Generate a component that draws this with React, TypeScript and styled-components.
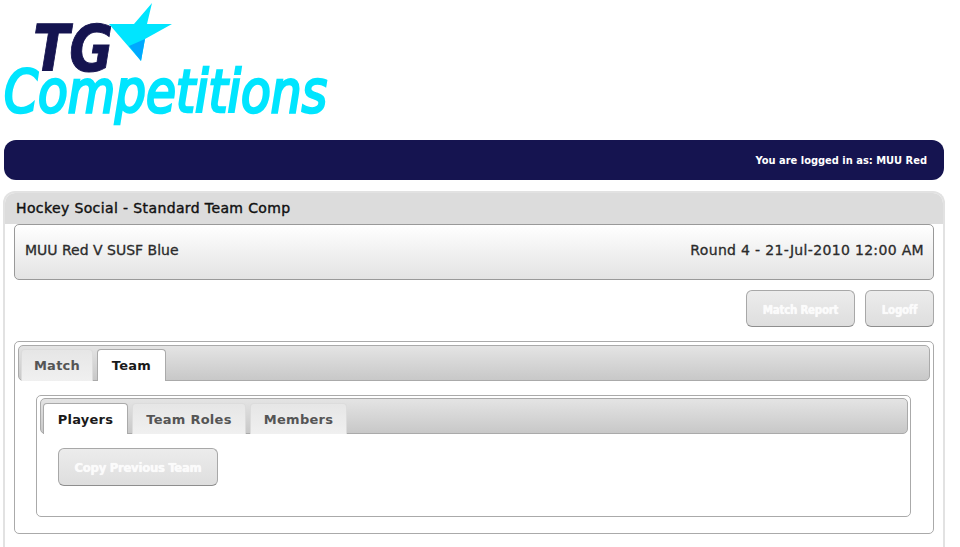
import React from 'react';
import styled, { createGlobalStyle } from 'styled-components';

const GlobalStyle = createGlobalStyle`
    html, body {
        margin: 0;
        padding: 0;
        height: 547px;
        overflow: hidden;
        background: #fff;
    }
    body {
        font-family: 'DejaVu Sans', Verdana, sans-serif;
    }
`;

const Page = styled.div`
    width: 960px;
    box-sizing: border-box;
    padding-left: 3px;
`;

const LogoWrap = styled.div`
    height: 140px;
    margin-left: -3px;
`;

const UserBar = styled.div`
    box-sizing: border-box;
    width: 940px;
    height: 40px;
    margin-left: 1px;
    padding-right: 17px;
    background: #151450;
    border-radius: 12px;
    color: #fff;
    font-family: 'DejaVu Sans Condensed', 'DejaVu Sans', sans-serif;
    font-size: 11px;
    font-weight: bold;
    display: flex;
    align-items: center;
    justify-content: flex-end;
`;

const Panel = styled.section`
    box-sizing: border-box;
    width: 942px;
    height: 370px;
    margin-top: 11px;
    border: 2px solid #e2e2e2;
    border-bottom: 0;
    border-radius: 12px 12px 0 0;
    background: #fff;
`;

const PanelTitle = styled.h1`
    box-sizing: border-box;
    height: 31px;
    margin: 0;
    padding: 6px 0 0 11px;
    background: #dcdcdc;
    border-radius: 10px 10px 0 0;
    color: #111;
    font-size: 14px;
    font-weight: normal;
    letter-spacing: 0.38px;
    line-height: 19px;
    -webkit-text-stroke: 0.4px #111;
`;

const PanelBody = styled.div`
    padding: 0 9px;
`;

const MatchBox = styled.div`
    box-sizing: border-box;
    height: 56px;
    padding: 0 9px 5px 10px;
    border: 1px solid #999;
    border-radius: 5px;
    background: linear-gradient(#ffffff, #e3e3e3);
    color: #2b2b2b;
    font-size: 14px;
    -webkit-text-stroke: 0.3px #2b2b2b;
    display: flex;
    align-items: center;
    justify-content: space-between;
`;

const MatchTime = styled.span`
    letter-spacing: 0.33px;
`;

const ActionRow = styled.div`
    display: flex;
    justify-content: flex-end;
    gap: 10px;
    margin: 10px 0 14px;
`;

const DisabledButton = styled.button<{ $width: number; $large?: boolean }>`
    box-sizing: border-box;
    width: ${p => p.$width}px;
    height: ${p => (p.$large ? 38 : 37)}px;
    padding: ${p => (p.$large ? '0' : '2px 0 0')};
    border: 1px solid #a8a8a8;
    border-bottom-color: #8e8e8e;
    border-radius: 6px;
    background: linear-gradient(#ececec, #dedede);
    color: #fbfbfb;
    font-family: 'DejaVu Sans Condensed', 'DejaVu Sans', sans-serif;
    font-size: ${p => (p.$large ? 13 : 11.5)}px;
    font-weight: bold;
    letter-spacing: -0.3px;
    text-shadow: 0 0 1px #fff;
`;

const TabBox = styled.div<{ $inner?: boolean }>`
    box-sizing: border-box;
    height: ${p => (p.$inner ? 122 : 193)}px;
    padding: ${p => (p.$inner ? '2px 2px 3px 3px' : '3px')};
    border: 1px solid #aaa;
    border-radius: 5px;
    background: #fff;
`;

const TabStrip = styled.div<{ $inner?: boolean }>`
    box-sizing: border-box;
    height: 36px;
    padding: ${p => (p.$inner ? 4 : 3)}px 0 0 2px;
    border: 1px solid #aaa;
    border-radius: 5px;
    background: linear-gradient(#e4e4e4, #c8c8c8);
    display: flex;
    gap: 4px;
`;

const Tab = styled.div<{ $active?: boolean; $width: number }>`
    box-sizing: border-box;
    width: ${p => p.$width}px;
    margin-bottom: -1px;
    border: 1px solid ${p => (p.$active ? '#aaa' : '#dcdcdc')};
    border-bottom: 0;
    border-radius: 4px 4px 0 0;
    background: ${p => (p.$active ? '#fff' : 'linear-gradient(#e6e6e6, #f0f0f0)')};
    color: ${p => (p.$active ? '#1a1a1a' : '#555')};
    font-size: 13px;
    font-weight: bold;
    letter-spacing: 0.25px;
    display: flex;
    align-items: center;
    justify-content: center;
`;

const TabContent = styled.div`
    padding: 14px 19px 14px 18px;
`;

const InnerContent = styled.div`
    padding: 14px 18px;
`;

function Logo() {
    return (
        <svg width="340" height="130" viewBox="0 0 340 130" role="img" aria-label="TG Competitions">
            <polygon points="109,24 134,24 152,3 147,24 172,24 145,39 141,61" fill="#00e5ff" />
            <polygon points="129,46 145,39 141,61" fill="#00a8ff" />
            <text x="33" y="71" fontFamily="'DejaVu Sans', sans-serif" fontSize="64" fontWeight="700" fontStyle="italic" fill="#151450" stroke="#151450" strokeWidth="1" textLength="80" lengthAdjust="spacingAndGlyphs">TG</text>
            <text x="4" y="112" fontFamily="'DejaVu Sans Condensed', 'DejaVu Sans', sans-serif" fontSize="59" fontStyle="italic" fill="#00e5ff" stroke="#00e5ff" strokeWidth="2.6" textLength="323" lengthAdjust="spacingAndGlyphs">Competitions</text>
        </svg>
    );
}

export default function App() {
    return (
        <Page>
            <GlobalStyle />
            <LogoWrap>
                <Logo />
            </LogoWrap>
            <UserBar>You are logged in as: MUU Red</UserBar>
            <Panel>
                <PanelTitle>Hockey Social - Standard Team Comp</PanelTitle>
                <PanelBody>
                    <MatchBox>
                        <span>MUU Red V SUSF Blue</span>
                        <MatchTime>Round 4 - 21-Jul-2010 12:00 AM</MatchTime>
                    </MatchBox>
                    <ActionRow>
                        <DisabledButton $width={109} disabled>Match Report</DisabledButton>
                        <DisabledButton $width={69} disabled>Logoff</DisabledButton>
                    </ActionRow>
                    <TabBox>
                        <TabStrip>
                            <Tab $width={72}>Match</Tab>
                            <Tab $width={69} $active>Team</Tab>
                        </TabStrip>
                        <TabContent>
                            <TabBox $inner>
                                <TabStrip $inner>
                                    <Tab $width={85} $active>Players</Tab>
                                    <Tab $width={114}>Team Roles</Tab>
                                    <Tab $width={97}>Members</Tab>
                                </TabStrip>
                                <InnerContent>
                                    <DisabledButton $width={160} $large disabled>Copy Previous Team</DisabledButton>
                                </InnerContent>
                            </TabBox>
                        </TabContent>
                    </TabBox>
                </PanelBody>
            </Panel>
        </Page>
    );
}
